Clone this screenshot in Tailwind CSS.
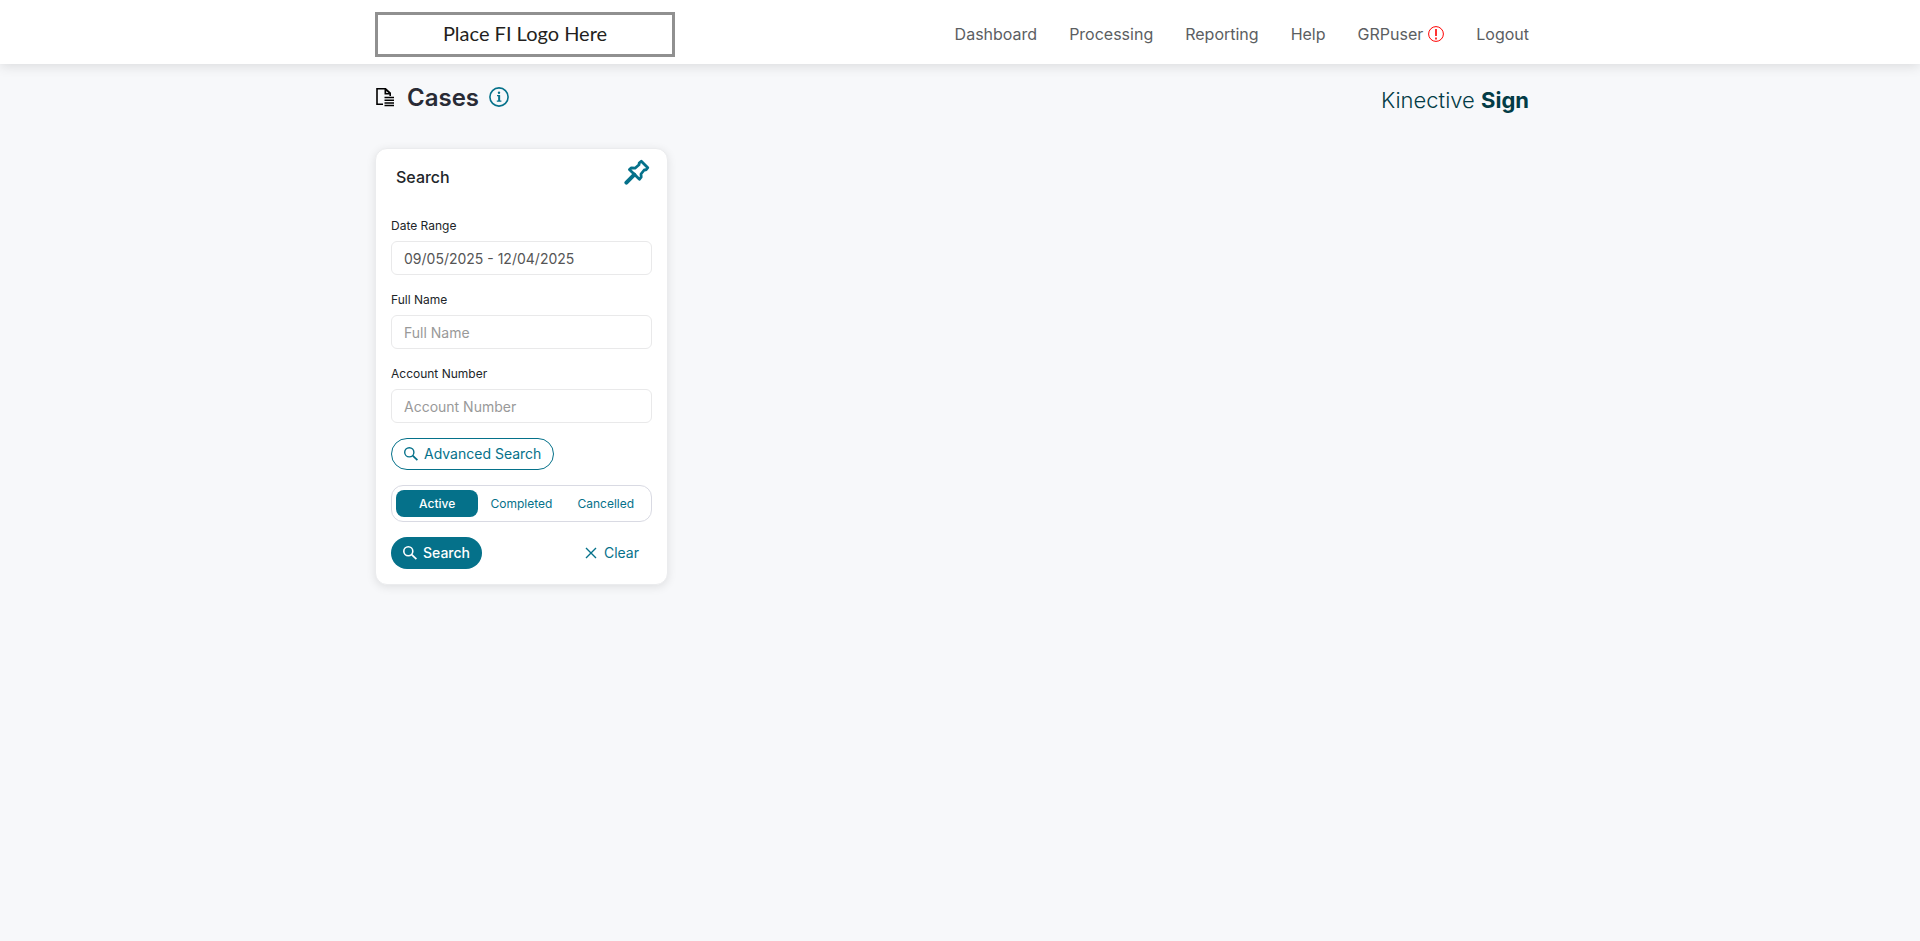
<!DOCTYPE html>
<html lang="en">
  <head>
    <meta charset="UTF-8" />
    <meta name="viewport" content="width=device-width, initial-scale=1.0" />
    <script src="https://cdn.jsdelivr.net/npm/@tailwindcss/browser@4"></script>
    <title>Cases</title>
  </head>
  <body class="min-h-screen bg-[#f7f8fa] font-[Inter,sans-serif] text-[#212529]">
    <header class="bg-white shadow-[0_2px_12px_rgba(0,0,0,0.12)]">
      <div class="mx-auto flex h-16 max-w-[1170px] items-center justify-between pr-4">
        <a
          href="#"
          class="mt-1 flex h-[45px] w-[300px] items-center justify-center border-3 border-[#909090] pb-0.5 font-[Lato,sans-serif] text-xl text-[#231f20]"
          >Place FI Logo Here</a
        >
        <nav class="flex items-center gap-8 pt-1 text-base text-[#5b5e62]">
          <a href="#">Dashboard</a>
          <a href="#">Processing</a>
          <a href="#">Reporting</a>
          <a href="#">Help</a>
          <a href="#" class="flex items-center gap-[5px]">
            GRPuser
            <svg class="size-4" viewBox="0 0 16 16" fill="none" stroke="#f00">
              <circle cx="8" cy="8" r="7.4" />
              <path d="M8 3v7M8 11.5v2" stroke-width="1.6" />
            </svg>
          </a>
          <a href="#">Logout</a>
        </nav>
      </div>
    </header>

    <main class="mx-auto max-w-[1170px]">
      <div class="flex items-start justify-between pr-4 pt-4">
        <div class="flex h-[34px] items-center">
          <svg class="size-5" viewBox="0 0 20 20" fill="none" stroke="#000" stroke-width="1.6">
            <path d="M8 17.2H2V1.8h8.5L15.2 6v3" />
            <path d="M9.5 1.5V7.5H16L10.5 1.5Z" fill="#000" stroke="none" />
            <path d="M11.2 4V6h2.2Z" fill="#f7f8fa" stroke="none" />
            <path d="M9.5 10.5H19M9.5 13.2H19M9.5 15.9H19M9.5 18.6H19" stroke-width="1.5" />
          </svg>
          <h1 class="ml-3 pt-0.5 text-2xl font-semibold text-[#292b35]">Cases</h1>
          <button type="button" aria-label="Info" class="ml-2.5">
            <svg class="size-5" viewBox="0 0 20 20" fill="none" stroke="#05718a">
              <circle cx="10" cy="10" r="9.1" stroke-width="1.6" />
              <path d="M8 8.7h2.2V14M7.8 14.2h4.6" stroke-width="1.3" />
              <path d="M10.2 8.2V14" stroke-width="1.9" />
              <circle cx="10" cy="5.7" r="1.2" fill="#05718a" stroke="none" />
            </svg>
          </button>
        </div>
        <div class="pt-1 text-[22px] font-light leading-8 text-[#033c46]">
          Kinective <span class="font-bold">Sign</span>
        </div>
      </div>

      <form
        class="mt-8 w-[293px] rounded-xl border border-[#ebecee] bg-white px-[15px] pb-[15px] shadow-[0_2px_10px_rgba(0,0,0,0.1)]"
        onsubmit="event.preventDefault()"
      >
        <div class="flex h-[67px] items-start justify-between pl-[5px]">
          <h2 class="mt-4 text-base font-medium">Search</h2>
          <button type="button" aria-label="Pin search" class="mt-2.5 mr-0.5">
            <svg
              class="size-[26px]"
              viewBox="0 0 26 26"
              fill="none"
              stroke="#05718a"
              stroke-width="2.8"
              stroke-linejoin="round"
            >
              <path d="M17.3 2.2L23.8 8.7L22 10.9L20.2 11L17 15L17.2 18.2L15.4 20.3L5.4 10.6L7.4 8.8L11 9.2L15 5.8L15.2 4Z" />
              <path d="M10.3 15.7L2.4 23.6" stroke-width="4" stroke-linecap="round" />
            </svg>
          </button>
        </div>

        <div class="flex flex-col gap-[15px]">
          <div>
            <label for="date" class="mb-[5px] block text-xs leading-5">Date Range</label>
            <input
              id="date"
              type="text"
              value="09/05/2025 - 12/04/2025"
              class="block h-[34px] w-full rounded-md border border-[#e9e9ea] px-3 text-sm text-[#555]"
            />
          </div>
          <div>
            <label for="name" class="mb-[5px] block text-xs leading-5">Full Name</label>
            <input
              id="name"
              type="text"
              placeholder="Full Name"
              class="block h-[34px] w-full rounded-md border border-[#e9e9ea] px-3 text-sm placeholder:text-[#999]"
            />
          </div>
          <div>
            <label for="account" class="mb-[5px] block text-xs leading-5">Account Number</label>
            <input
              id="account"
              type="text"
              placeholder="Account Number"
              class="block h-[34px] w-full rounded-md border border-[#e9e9ea] px-3 text-sm placeholder:text-[#999]"
            />
          </div>

          <button
            type="button"
            class="flex h-8 items-center gap-1.5 self-start rounded-full border border-[#05718a] px-3 text-sm text-[#05718a]"
          >
            <svg class="size-3.5" viewBox="0 0 14 14" fill="none" stroke="currentColor" stroke-width="1.4">
              <circle cx="5.3" cy="5.3" r="4.6" />
              <path d="M8.7 8.7L13.4 13.2" stroke-width="1.8" />
            </svg>
            Advanced Search
          </button>

          <div class="grid h-[37px] grid-cols-3 gap-0.5 rounded-xl border border-[#d9dae3] p-1 text-xs text-[#05718a]">
            <button type="button" class="rounded-lg bg-[#05718a] font-medium text-white">Active</button>
            <button type="button">Completed</button>
            <button type="button">Cancelled</button>
          </div>

          <div class="flex items-center justify-between text-sm">
            <button type="submit" class="flex h-8 items-center gap-1.5 rounded-full bg-[#05718a] px-3 font-medium text-white">
              <svg class="size-3.5" viewBox="0 0 14 14" fill="none" stroke="currentColor" stroke-width="1.6">
                <circle cx="5.3" cy="5.3" r="4.5" />
                <path d="M8.7 8.7L13.4 13.2" stroke-width="1.8" />
              </svg>
              Search
            </button>
            <button type="reset" class="flex h-8 items-center gap-[7px] px-[13px] text-[#05718a]">
              <svg class="size-3" viewBox="0 0 12 12" fill="none" stroke="currentColor" stroke-width="1.4">
                <path d="M1 1L11 11M11 1L1 11" />
              </svg>
              Clear
            </button>
          </div>
        </div>
      </form>
    </main>
  </body>
</html>
